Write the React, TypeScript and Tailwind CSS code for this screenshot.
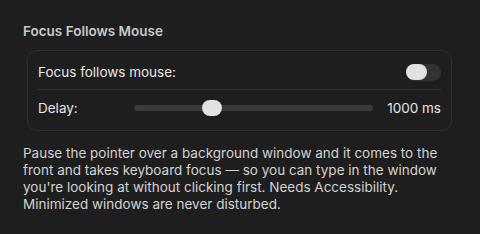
export default function App() {
  const delay = 1000;
  const pct = 0.31;

  return (
    <div
      className="w-[480px] h-[234px] bg-[#1e1e1e] overflow-hidden pl-[23px] pr-[28px] pt-[23px] antialiased"
      style={{ fontFamily: "Inter, 'Noto Sans', sans-serif" }}
    >
      <h2 className="text-[13.5px] leading-4 font-semibold text-[#c9c9c9]">Focus Follows Mouse</h2>

      <div className="mt-[11px] ml-[4px] rounded-[10px] border border-[#2f2f2f] px-[10px] pt-[12px] pb-[13px]">
        <div className="flex h-[18px] items-center justify-between">
          <span className="text-[13.5px] text-[#e6e6e6]">Focus follows mouse:</span>
          <div className="flex h-[17px] w-[35px] items-center rounded-full bg-[#333333]">
            <div className="h-[16px] w-[21px] rounded-full bg-[#e2e2e2]" />
          </div>
        </div>

        <div className="mt-[8px] h-px bg-[#333333]" />

        <div className="mt-[9px] flex h-[18px] items-center">
          <span className="w-[96px] text-[13.5px] text-[#e6e6e6]">Delay:</span>
          <div className="relative h-[18px] w-[239px]">
            <div className="absolute left-0 right-0 top-[6px] h-[6px] rounded-full bg-[#3a3a3a]" />
            <div
              className="absolute top-[1px] h-[16px] w-[20px] rounded-full bg-[#e2e2e2] shadow-[0_0_1px_rgba(0,0,0,0.5)]"
              style={{ left: `${pct * 219}px` }}
            />
          </div>
          <span className="ml-auto text-[13.5px] text-[#e6e6e6]">{delay} ms</span>
        </div>
      </div>

      <p className="mt-[14px] text-[13.5px] leading-[17px] text-[#d2d2d2] whitespace-nowrap">
        Pause the pointer over a background window and it comes to the
        <br />
        front and takes keyboard focus — so you can type in the window
        <br />
        you're looking at without clicking first. Needs Accessibility.
        <br />
        Minimized windows are never disturbed.
      </p>
    </div>
  );
}
